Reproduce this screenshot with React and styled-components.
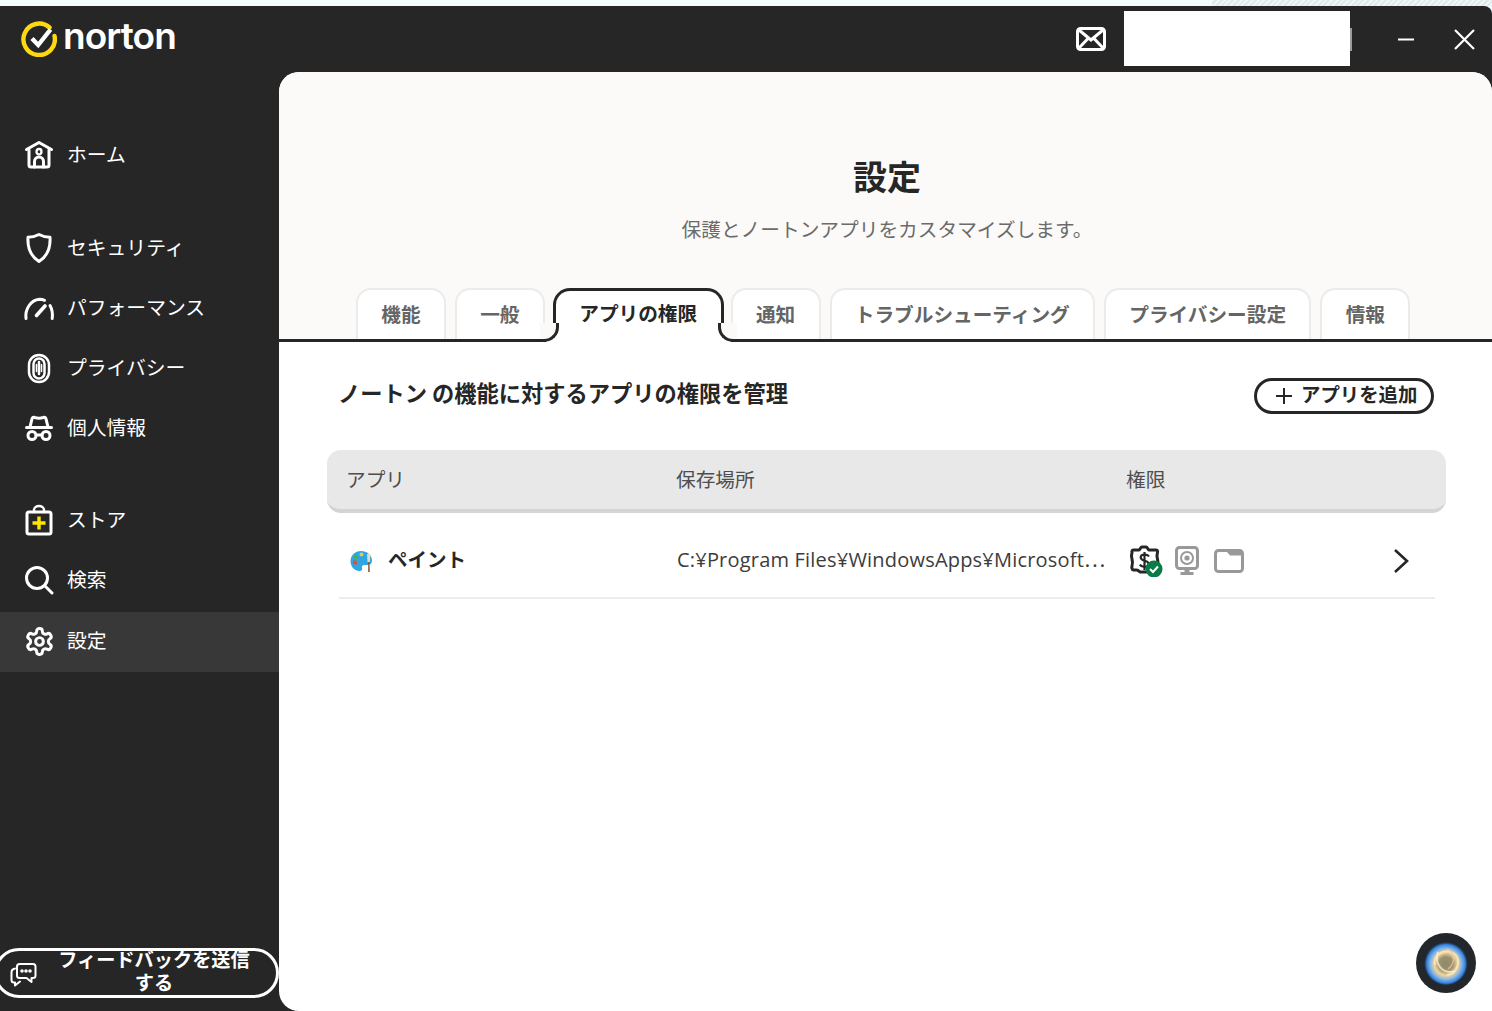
import React from "react";
import styled, { createGlobalStyle } from "styled-components";

const Global = createGlobalStyle`
  html, body { margin: 0; padding: 0; height: 100%; background: #f2fbff; overflow: hidden; }
  #root { height: 100%; }
  * { box-sizing: border-box; }
  body { font-family: "Noto Sans CJK JP", "Noto Sans", sans-serif; }
`;

const Page = styled.div`
  height: 1011px;
  display: flex;
  flex-direction: column;
  position: relative;
`;
const TopStrip = styled.div`
  height: 6px;
  flex: none;
  display: flex;
  justify-content: flex-end;
  background: #f3fdff;
`;
const StripHatch = styled.div`
  width: 280px;
  background: repeating-linear-gradient(135deg, #eef6f8 0 2px, #dfeaed 2px 4px);
`;
const Win = styled.div`
  flex: 1;
  min-height: 0;
  background: #262626;
  border-top-right-radius: 8px;
  display: flex;
  flex-direction: column;
`;
const TitleBar = styled.header`
  height: 66px;
  flex: none;
  display: flex;
  align-items: center;
  padding: 0 17px 0 21px;
`;
const Logo = styled.div`
  display: flex;
  align-items: center;
  gap: 6px;
  margin-top: -1px;
  color: #fff;
  font-family: Inter, sans-serif;
  font-weight: 600;
  font-size: 37px;
  letter-spacing: -0.9px;
  line-height: 36px;
`;
const LogoWord = styled.span`
  position: relative;
  top: -3px;
`;
const TitleActions = styled.div`
  margin-left: auto;
  display: flex;
  align-items: center;
`;
const MailButton = styled.div`
  display: flex;
  margin-top: -1px;
`;
const Redaction = styled.div`
  width: 226px;
  height: 55px;
  margin: 0 0 1px 18px;
  background: #fff;
`;
const Sliver = styled.div`
  width: 2px;
  height: 23px;
  margin-top: 1px;
  background: #9b9b9b;
`;
const WinControl = styled.div`
  display: flex;
  margin-left: ${p => p.$ml}px;
`;
const Body = styled.div`
  flex: 1;
  min-height: 0;
  display: flex;
`;
const Sidebar = styled.nav`
  width: 279px;
  flex: none;
  display: flex;
  flex-direction: column;
  padding: 53px 0 13px;
`;
const NavGroup = styled.div`
  display: flex;
  flex-direction: column;
  margin-bottom: ${p => p.$mb}px;
`;
const NavItem = styled.div`
  height: 60px;
  display: flex;
  align-items: center;
  gap: 12px;
  padding-left: 23px;
  color: #fff;
  font-size: 19.8px;
  background: ${p => (p.$active ? "#383838" : "transparent")};
  margin-top: ${p => (p.$active ? 2 : 0)}px;
  padding-bottom: ${p => (p.$active ? 2 : 0)}px;
`;
const NavIcon = styled.span`
  width: 32px;
  height: 32px;
  flex: none;
  display: flex;
  align-items: center;
  justify-content: center;
`;
const NavLabel = styled.span`
  position: relative;
  top: -2px;
`;
const Feedback = styled.div`
  margin: auto 0 0 -6px;
  width: 285px;
  height: 50px;
  flex: none;
  border: 3px solid #fff;
  border-radius: 25px;
  display: flex;
  align-items: center;
  color: #fff;
  padding-left: 13px;
`;
const ChatWrap = styled.span`
  display: flex;
  margin-top: 3px;
`;
const FeedbackText = styled.span`
  width: 200px;
  margin-left: 17px;
  text-align: center;
  font-weight: 700;
  font-size: 19.2px;
  line-height: 23px;
  position: relative;
  top: -2px;
`;
const Panel = styled.main`
  flex: 1;
  min-width: 0;
  background: #fff;
  border-radius: 20px 20px 0 20px;
  overflow: hidden;
  display: flex;
  flex-direction: column;
`;
const PanelHead = styled.div`
  flex: none;
  height: 270px;
  background: #fbfaf8;
  border-bottom: 3px solid #262626;
  display: flex;
  flex-direction: column;
  align-items: center;
  padding: 80px 0 0 3px;
`;
const Title = styled.h1`
  margin: 0;
  font-size: 34px;
  line-height: 48px;
  font-weight: 700;
  color: #262626;
`;
const Subtitle = styled.p`
  margin: 15px 0 0;
  font-size: 19.7px;
  line-height: 28px;
  color: #6b6b6b;
`;
const Tabs = styled.div`
  align-self: stretch;
  margin-top: auto;
  display: flex;
  align-items: flex-end;
  gap: 9px;
  padding-left: 74px;
`;
const Tab = styled.div`
  height: 51px;
  padding: 0 23.3px 2px;
  background: #fff;
  border: 2px solid #ebebeb;
  border-bottom: 0;
  border-radius: 15px 15px 0 0;
  color: #656565;
  font-size: 19.65px;
  font-weight: 700;
  display: flex;
  align-items: center;
  justify-content: center;
  white-space: nowrap;
`;
const ActiveTab = styled(Tab)`
  position: relative;
  height: 54px;
  margin: 0 -2px -3px -1px;
  padding: 0 23.5px 8px;
  border: 3px solid #262626;
  border-bottom: 0;
  border-radius: 17px 17px 0 0;
  color: #262626;
  z-index: 1;
  &::before, &::after {
    content: "";
    position: absolute;
    bottom: 0;
    width: 16px;
    height: 16px;
    border-bottom: 3px solid #262626;
    background: #fbfaf8;
  }
  &::before {
    left: -16px;
    border-right: 3px solid #262626;
    border-bottom-right-radius: 15px;
    box-shadow: 6px 6px 0 #fff;
  }
  &::after {
    right: -16px;
    border-left: 3px solid #262626;
    border-bottom-left-radius: 15px;
    box-shadow: -6px 6px 0 #fff;
  }
`;
const PanelBody = styled.div`
  flex: 1;
  padding: 36px 46px 0 48px;
  display: flex;
  flex-direction: column;
`;
const SectionRow = styled.div`
  display: flex;
  align-items: center;
  justify-content: space-between;
  padding: 0 12px 0 11px;
  height: 36px;
`;
const SectionTitle = styled.h2`
  margin: 0;
  font-size: 22.25px;
  font-weight: 700;
  color: #262626;
  position: relative;
  top: -4px;
`;
const AddButton = styled.div`
  width: 180px;
  height: 36px;
  border: 3px solid #262626;
  border-radius: 18px;
  display: flex;
  align-items: center;
  gap: 9px;
  padding-left: 19px;
  font-size: 19.4px;
  font-weight: 700;
  color: #262626;
`;
const AddLabel = styled.span`
  position: relative;
  top: -3px;
`;
const TableHead = styled.div`
  margin-top: 36px;
  height: 63px;
  background: #e8e8e8;
  border-bottom: 4px solid #d4d4d4;
  border-radius: 14px;
  display: grid;
  grid-template-columns: 330px 450px 1fr;
  padding: 0 19px 2px;
  align-items: center;
  color: #4e4e4e;
  font-size: 19.7px;
`;
const Row = styled.div`
  margin: 0 11px 0 12px;
  height: 86px;
  padding-top: 8px;
  border-bottom: 2px solid #ececec;
  display: grid;
  grid-template-columns: 338px 450px 1fr;
  align-items: center;
`;
const AppCell = styled.div`
  display: flex;
  align-items: center;
  gap: 14px;
  padding-left: 11px;
  color: #262626;
  font-size: 19.5px;
`;
const AppGlyph = styled.svg`
  margin-top: 3px;
  flex: none;
`;
const AppName = styled.span`
  position: relative;
  top: -1px;
  font-weight: 700;
`;
const PathCell = styled.div`
  white-space: nowrap;
  margin-top: -2px;
  font-family: "Open Sans", "Noto Sans CJK JP", sans-serif;
  font-size: 20px;
  color: #3c3c3c;
  letter-spacing: 0.2px;
`;
const PathDots = styled.span`
  font-family: "Noto Sans CJK JP", sans-serif;
  letter-spacing: 0;
`;
const PermCell = styled.div`
  display: flex;
  align-items: center;
  gap: 12px;
  padding-left: 2px;
  margin-top: 4px;
`;
const PermIcon = styled.span`
  display: flex;
  margin-left: ${p => p.$ml || 0}px;
`;
const Chevron = styled.span`
  display: flex;
  margin-left: auto;
  margin-right: 26px;
`;
const Assistant = styled.div`
  position: absolute;
  left: 1416px;
  top: 933px;
  width: 60px;
  height: 60px;
  border-radius: 50%;
  background: #23262a;
  display: flex;
  align-items: center;
  justify-content: center;
`;

const s = { fill: "none", stroke: "#fff", strokeWidth: 3, strokeLinecap: "round", strokeLinejoin: "round" };

const HomeIcon = () => (
  <svg width="30" height="30" viewBox="0 0 30 30" {...s}>
    <path d="M2.500 9.500 15 2.500l12.500 7" />
    <path d="M5 10v15a2 2 0 0 0 2 2h16a2 2 0 0 0 2-2V10" />
    <path d="M10.500 27v-5.500a4.500 4.500 0 0 1 9 0V27" />
    <rect x="12.600" y="9" width="4.800" height="5.400" rx="2.200" strokeWidth="2.400" />
  </svg>
);
const ShieldIcon = () => (
  <svg width="28" height="32" viewBox="0 0 28 32" {...s}>
    <path d="M14 2.500c3 1.600 7 2.800 11 2.800.6 9.800-2.200 18.600-11 24.200C5.200 23.900 2.400 15.100 3 5.300c4 0 8-1.200 11-2.800z" />
  </svg>
);
const GaugeIcon = () => (
  <svg width="32" height="26" viewBox="0 0 32 26" {...s}>
    <path d="M3 23.500C1.800 14.500 7.500 5 16.500 4.300c2 0 3.600.3 5 1" />
    <path d="M27 10.500c2 3.500 2.900 8 2.200 13" />
    <path d="M13.500 20.500 22 11" strokeWidth="3.600" />
  </svg>
);
const PrintIcon = () => (
  <svg width="26" height="32" viewBox="0 0 26 32" {...s} strokeWidth="2.500">
    <rect x="3" y="3" width="20" height="27" rx="10" />
    <path d="M7.500 21V12a5.500 5.500 0 0 1 11 0v9a5.500 5.500 0 0 1-11 0" />
    <path d="M13 10v12" />
    <path d="M10.500 12.500v7M15.500 12.500v7" strokeWidth="1.600" />
  </svg>
);
const SpyIcon = () => (
  <svg width="30" height="28" viewBox="0 0 30 28" {...s}>
    <path d="M2.500 13.500h25" />
    <path d="M6 13 8 4.800c.3-1.300 1.500-1.800 2.700-1.300 2.900 1 5.700 1 8.600 0 1.200-.5 2.400 0 2.700 1.300L24 13" />
    <circle cx="8" cy="21.500" r="4" />
    <circle cx="22" cy="21.500" r="4" />
    <path d="M12 21h6" />
  </svg>
);
const StoreIcon = () => (
  <svg width="30" height="32" viewBox="0 0 30 32">
    <g {...s}>
      <rect x="3" y="8" width="24" height="22" rx="2" />
      <path d="M10 8V6a5 4 0 0 1 10 0v2" strokeWidth="2.400" />
    </g>
    <path d="M15 12.500v13M8.500 19h13" stroke="#ffe600" strokeWidth="3.400" fill="none" />
  </svg>
);
const SearchIcon = () => (
  <svg width="30" height="30" viewBox="0 0 30 30" {...s}>
    <circle cx="13" cy="13" r="10.500" />
    <path d="m21 21 7 7" />
  </svg>
);
const GearIcon = () => (
  <svg width="31" height="31" viewBox="0 0 24 24" {...s} strokeWidth="2.300">
    <path d="M12.220 2h-.440a2 2 0 0 0-2 2v.180a2 2 0 0 1-1 1.730l-.430.250a2 2 0 0 1-2 0l-.150-.080a2 2 0 0 0-2.730.730l-.220.380a2 2 0 0 0 .730 2.730l.150.100a2 2 0 0 1 1 1.720v.510a2 2 0 0 1-1 1.740l-.150.090a2 2 0 0 0-.730 2.730l.220.380a2 2 0 0 0 2.730.730l.150-.080a2 2 0 0 1 2 0l.430.250a2 2 0 0 1 1 1.730V20a2 2 0 0 0 2 2h.440a2 2 0 0 0 2-2v-.180a2 2 0 0 1 1-1.730l.430-.250a2 2 0 0 1 2 0l.150.080a2 2 0 0 0 2.730-.730l.220-.390a2 2 0 0 0-.730-2.730l-.150-.080a2 2 0 0 1-1-1.740v-.500a2 2 0 0 1 1-1.740l.150-.090a2 2 0 0 0 .730-2.730l-.220-.380a2 2 0 0 0-2.730-.730l-.150.080a2 2 0 0 1-2 0l-.430-.250a2 2 0 0 1-1-1.730V4a2 2 0 0 0-2-2z" />
    <circle cx="12" cy="12" r="3" />
  </svg>
);
const ChatIcon = () => (
  <svg width="27" height="24" viewBox="0 0 27 24" fill="none" stroke="#fff" strokeWidth="2" strokeLinejoin="round" strokeLinecap="round">
    <path d="M7 3.500C7 2.100 8 1 9.500 1H23c1.500 0 2.500 1.100 2.500 2.500v9c0 1.400-1 2.500-2.500 2.500h-1.500v4l-5-4H9.500C8 15 7 13.900 7 12.500z" />
    <path d="M5 5.500C2.800 6 1.500 7 1.500 9v8c0 1.500 1 2.500 2.500 2.500h1v3l5-4" />
    <circle cx="12" cy="8" r=".8" fill="#fff" />
    <circle cx="16" cy="8" r=".8" fill="#fff" />
    <circle cx="20" cy="8" r=".8" fill="#fff" />
  </svg>
);

const nav1 = [
  [ShieldIcon, "セキュリティ"],
  [GaugeIcon, "パフォーマンス"],
  [PrintIcon, "プライバシー"],
  [SpyIcon, "個人情報"],
];
const nav2 = [
  [StoreIcon, "ストア"],
  [SearchIcon, "検索"],
  [GearIcon, "設定", true],
];

const NavRow = ({ icon: Icon, label, active }) => (
  <NavItem $active={active}>
    <NavIcon><Icon /></NavIcon>
    <NavLabel>{label}</NavLabel>
  </NavItem>
);

const tabs = ["機能", "一般", "アプリの権限", "通知", "トラブルシューティング", "プライバシー設定", "情報"];

export default function App() {
  return (
    <Page>
      <Global />
      <TopStrip><StripHatch /></TopStrip>
      <Win>
        <TitleBar>
          <Logo>
            <svg width="36" height="36" viewBox="0 0 36 36" fill="none">
              <path d="M28.500 6.500A15.700 15.700 0 1 0 33.500 15" stroke="#ffd90f" strokeWidth="4.400" strokeLinecap="round" />
              <path d="m11 17.500 6.200 6.500L29.500 8.500" stroke="#fff" strokeWidth="4.400" />
            </svg>
            <LogoWord>norton</LogoWord>
          </Logo>
          <TitleActions>
            <MailButton>
              <svg width="30" height="24" viewBox="0 0 30 24" fill="none" stroke="#fff" strokeWidth="3">
                <rect x="1.500" y="1.500" width="27" height="21" rx="3" />
                <path d="m3 3 12 10L27 3M3 21l9-9.500M27 21l-9-9.500" />
              </svg>
            </MailButton>
            <Redaction />
            <Sliver />
            <WinControl $ml={46}>
              <svg width="16" height="3" viewBox="0 0 16 3"><path d="M0 1.500h16" stroke="#fff" strokeWidth="2" /></svg>
            </WinControl>
            <WinControl $ml={40}>
              <svg width="21" height="21" viewBox="0 0 21 21"><path d="m1 1 19 19M20 1 1 20" stroke="#fff" strokeWidth="2.200" /></svg>
            </WinControl>
          </TitleActions>
        </TitleBar>
        <Body>
          <Sidebar>
            <NavGroup $mb={33}>
              <NavRow icon={HomeIcon} label="ホーム" />
            </NavGroup>
            <NavGroup $mb={32}>
              {nav1.map(([I, l]) => <NavRow key={l} icon={I} label={l} />)}
            </NavGroup>
            <NavGroup $mb={0}>
              {nav2.map(([I, l, a]) => <NavRow key={l} icon={I} label={l} active={a} />)}
            </NavGroup>
            <Feedback>
              <ChatWrap><ChatIcon /></ChatWrap>
              <FeedbackText>フィードバックを送信する</FeedbackText>
            </Feedback>
          </Sidebar>
          <Panel>
            <PanelHead>
              <Title>設定</Title>
              <Subtitle>保護とノートンアプリをカスタマイズします。</Subtitle>
              <Tabs>
                {tabs.map((t, i) =>
                  i === 2 ? <ActiveTab key={t}>{t}</ActiveTab> : <Tab key={t}>{t}</Tab>
                )}
              </Tabs>
            </PanelHead>
            <PanelBody>
              <SectionRow>
                <SectionTitle>ノートン の機能に対するアプリの権限を管理</SectionTitle>
                <AddButton>
                  <svg width="16" height="16" viewBox="0 0 16 16"><path d="M8 0v16M0 8h16" stroke="#262626" strokeWidth="2" /></svg>
                  <AddLabel>アプリを追加</AddLabel>
                </AddButton>
              </SectionRow>
              <TableHead>
                <span>アプリ</span>
                <span>保存場所</span>
                <span>権限</span>
              </TableHead>
              <Row>
                <AppCell>
                  <AppGlyph width="24" height="24" viewBox="0 0 24 24">
                    <path d="M11 2C5 2 .5 6.500.500 12.500c0 5 4 9.500 9 9.500 2.500 0 3-1.500 2.500-3-.6-1.800.5-3 2.500-3h3c2.500 0 4.500-1.500 4.500-4.500C22 6 17 2 11 2z" fill="#2ea6e4" />
                    <circle cx="6" cy="8" r="2" fill="#4caf50" />
                    <circle cx="11.500" cy="5.500" r="2" fill="#f5c242" />
                    <rect x="3" y="11.500" width="4" height="4" rx="1" fill="#d9542b" />
                    <path d="M17 5h3.500l-.7 8h-2.300z" fill="#e8dcc0" />
                    <path d="M18.200 13h1.300l.3 10h-1.600z" fill="#7a5a3a" />
                  </AppGlyph>
                  <AppName>ペイント</AppName>
                </AppCell>
                <PathCell>C:¥Program Files¥WindowsApps¥Microsoft<PathDots>⋯</PathDots></PathCell>
                <PermCell>
                  <PermIcon>
                    <svg width="34" height="32" viewBox="0 0 34 32">
                      <path d="M10 5c1-.1 1.500-3 3-3h4c1.500 0 2 2.900 3 3h7c1 0 2 1 1.500 2.500-.8 2.500-.8 4 0 6.500.7 2.500.7 4.500 0 7-.5 1.500-.5 4-2 4H22c-1.500 0-2 1-3 2h-8c-1-1-2-2-3.500-2H4.500c-1.500 0-2-2.500-1.500-4 .7-2.500.7-4.500 0-7-.8-2.500-.8-4 0-6.500C2.500 6 3.500 5 4.500 5z" fill="none" stroke="#262626" strokeWidth="3" strokeLinejoin="round" />
                      <path d="M20 11.500c-1-1.500-2.600-2-4.500-2-2.500 0-3.800 1.300-3.800 3 0 4 8 2.500 8 6.500 0 1.800-1.700 3-4.200 3-2 0-3.700-.8-4.700-2.300M15.500 7v18" fill="none" stroke="#262626" strokeWidth="2.200" />
                      <circle cx="25" cy="24" r="8.500" fill="#0a7a46" />
                      <path d="m21 24 3 3 5-5.500" fill="none" stroke="#fff" strokeWidth="2" />
                    </svg>
                  </PermIcon>
                  <PermIcon $ml={0}>
                    <svg width="24" height="30" viewBox="0 0 24 30">
                      <rect x="1.500" y="1.500" width="21" height="21" rx="3" fill="none" stroke="#999" strokeWidth="3" />
                      <circle cx="12" cy="12" r="6" fill="none" stroke="#999" strokeWidth="2" />
                      <circle cx="12" cy="12" r="2.600" fill="#999" />
                      <path d="M9.500 23h5v3h4v3h-13v-3h4z" fill="#999" />
                    </svg>
                  </PermIcon>
                  <PermIcon $ml={3}>
                    <svg width="30" height="24" viewBox="0 0 30 24">
                      <rect x="1.500" y="1.500" width="27" height="21" rx="3" fill="none" stroke="#999" strokeWidth="3" />
                      <path d="M3 2h24v4.500H16L13 3H3z" fill="#999" />
                    </svg>
                  </PermIcon>
                  <Chevron>
                    <svg width="16" height="26" viewBox="0 0 16 26"><path d="m2 2 12 11L2 24" fill="none" stroke="#262626" strokeWidth="2.600" /></svg>
                  </Chevron>
                </PermCell>
              </Row>
            </PanelBody>
          </Panel>
        </Body>
      </Win>
      <Assistant>
        <svg width="44" height="44" viewBox="0 0 44 44" fill="none">
          <defs>
            <radialGradient id="core" cx="50%" cy="52%" r="50%">
              <stop offset="0" stopColor="#8d8a66" />
              <stop offset="0.32" stopColor="#9c9270" />
              <stop offset="0.52" stopColor="#f0d69c" />
              <stop offset="0.7" stopColor="#8fb6e0" />
              <stop offset="0.88" stopColor="#2f83e0" />
              <stop offset="1" stopColor="#1a4f8c" stopOpacity="0" />
            </radialGradient>
          </defs>
          <circle cx="22" cy="22" r="22" fill="url(#core)" />
          <path d="M11 24C8 12 24 6 32 14c5 7 1 19-9 20" stroke="#f9e7b6" strokeWidth="2" opacity=".85" />
          <path d="M14 11c-4 11 4 23 17 19" stroke="#fff1d6" strokeWidth="1.800" opacity=".75" />
          <path d="M23 8c8 3 9 14 1 20" stroke="#f3c9a8" strokeWidth="1.500" opacity=".7" />
        </svg>
      </Assistant>
    </Page>
  );
}
